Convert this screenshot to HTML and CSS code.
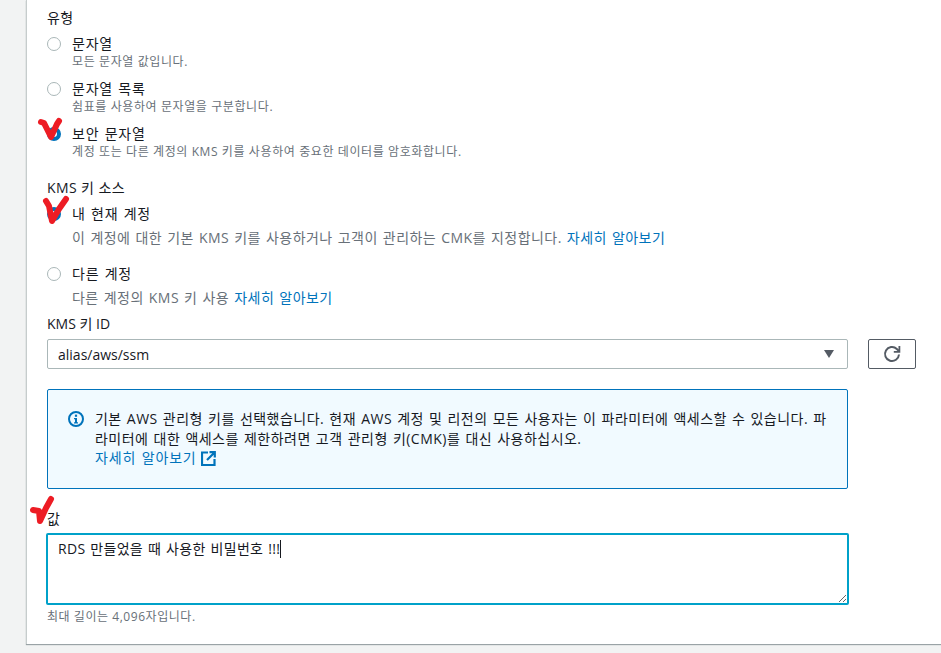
FILE: index.html
```html
<!DOCTYPE html>
<html lang="ko">
<head>
<meta charset="utf-8">
<title>파라미터</title>
<link rel="stylesheet" href="styles.css">
</head>
<body>
<main class="card">
  <div class="label label-type">유형</div>
  <div class="radio-item">
    <span class="radio"></span>
    <div><div class="title">문자열</div><div class="desc">모든 문자열 값입니다.</div></div>
  </div>
  <div class="radio-item">
    <span class="radio"></span>
    <div><div class="title">문자열 목록</div><div class="desc">쉼표를 사용하여 문자열을 구분합니다.</div></div>
  </div>
  <div class="radio-item">
    <span class="radio radio-on"></span>
    <div><div class="title">보안 문자열</div><div class="desc">계정 또는 다른 계정의 KMS 키를 사용하여 중요한 데이터를 암호화합니다.</div></div>
  </div>
  <div class="label label-source">KMS 키 소스</div>
  <div class="radio-item wide">
    <span class="radio radio-on"></span>
    <div><div class="title">내 현재 계정</div><div class="desc-lg">이 계정에 대한 기본 KMS 키를 사용하거나 고객이 관리하는 CMK를 지정합니다. <a class="link">자세히 알아보기</a></div></div>
  </div>
  <div class="radio-item wide">
    <span class="radio"></span>
    <div><div class="title">다른 계정</div><div class="desc-lg">다른 계정의 KMS 키 사용 <a class="link">자세히 알아보기</a></div></div>
  </div>
  <div class="label label-id">KMS 키 ID</div>
  <div class="select-row">
    <div class="select"><span>alias/aws/ssm</span><span class="caret-down"></span></div>
    <button class="refresh" type="button" aria-label="새로 고침">
      <svg width="18" height="18" viewBox="0 0 18 18" fill="none" stroke="#545b64" stroke-width="2"><path d="M16 9.5a7 7 0 1 1-2.2-5.6L16 6"/><path d="M16.4 1v5.8h-5.6" stroke-width="1.8"/></svg>
    </button>
  </div>
  <div class="alert">
    <svg class="alert-icon" width="16" height="16" viewBox="0 0 16 16"><circle cx="8" cy="8" r="7" fill="none" stroke="#0073bb" stroke-width="2"/><rect x="6.9" y="3.6" width="2.2" height="2.2" fill="#0073bb"/><path d="M6 7h3v4.2h1v1.2H6v-1.2h1V8.2H6z" fill="#0073bb"/></svg>
    <div class="alert-text">
      기본 AWS 관리형 키를 선택했습니다. 현재 AWS 계정 및 리전의 모든 사용자는 이 파라미터에 액세스할 수 있습니다. 파<br>라미터에 대한 액세스를 제한하려면 고객 관리형 키(CMK)를 대신 사용하십시오.<br>
      <a class="link">자세히 알아보기</a>
      <svg class="ext" width="15" height="15" viewBox="0 0 15 15" fill="none" stroke="#0073bb" stroke-width="2.2"><path d="M7 1.5H1v12.5h12.5V8"/><path d="M6 9l7-7M8.5 1.2h5.3v5.3"/></svg>
    </div>
  </div>
  <div class="label label-value">값</div>
  <div class="textarea">RDS 만들었을 때 사용한 비밀번호 !!!<span class="text-caret"></span></div>
  <div class="hint">최대 길이는 4,096자입니다.</div>
</main>
<svg class="marks" width="941" height="653" viewBox="0 0 941 653" fill="none" stroke="#ed1c24" stroke-width="6" stroke-linecap="round" stroke-linejoin="round" aria-hidden="true">
  <path d="M41 122l3 1 7 14 6-13 2-3"/>
  <path d="M46 201l3 5 3 15 7-12 7-10"/>
  <path d="M33 510l6 1 1 10 6-13 5-9"/>
</svg>
</body>
</html>
```
FILE: styles.css
```css
* { box-sizing: border-box; }
html, body { margin: 0; height: 653px; overflow: hidden; }
body {
  background: #f2f3f3;
  font-family: "Open Sans", "Noto Sans CJK KR", sans-serif;
  color: #16191f;
  position: relative;
}
.card {
  margin-left: 26px;
  height: 644px;
  padding: 8px 0 0 20px;
  background: #fff;
  border-left: 1px solid #c6cccc;
  box-shadow: 0 1px 1px 0 #9aa3a6;
  font-size: 14px;
}
.label { height: 20px; line-height: 20px; font-size: 14px; letter-spacing: 0.4px; }
.label-type { margin-bottom: 7px; }
.radio-item { display: flex; height: 45px; gap: 11px; }
.radio-item.wide { height: 60px; }
.radio {
  flex: none;
  width: 14px;
  height: 14px;
  margin-top: 2px;
  border: 1px solid #aab7b8;
  border-radius: 50%;
  background: #fff;
}
.radio-on { border: 4px solid #0073bb; }
.title { line-height: 18px; font-size: 14px; letter-spacing: 0.75px; word-spacing: 1px; }
.desc { line-height: 17px; font-size: 12px; letter-spacing: 0.6px; color: #687078; }
.desc-lg { margin-top: 6px; line-height: 18px; font-size: 14px; letter-spacing: 0.45px; word-spacing: 1px; color: #687078; }
.link { color: #0073bb; }
.label-source { margin-top: 8px; margin-bottom: 7px; }
.label-id { margin-top: -11px; margin-bottom: 5px; letter-spacing: 0; }
.select-row { display: flex; gap: 20px; align-items: flex-start; }
.select {
  width: 801px;
  height: 30px;
  padding: 0 13px 0 10px;
  border: 1px solid #aab7b8;
  border-radius: 2px;
  display: flex;
  justify-content: space-between;
  align-items: center;
  font-size: 14px;
}
.caret-down {
  width: 0;
  height: 0;
  border-left: 5px solid transparent;
  border-right: 5px solid transparent;
  border-top: 8px solid #545b64;
}
.refresh {
  width: 48px;
  height: 30px;
  padding: 0;
  background: #fff;
  border: 1px solid #545b64;
  border-radius: 2px;
  display: flex;
  align-items: center;
  justify-content: center;
}
.alert {
  width: 801px;
  height: 100px;
  margin-top: 20px;
  padding: 19px 0 0 20px;
  display: flex;
  gap: 11px;
  background: #f1faff;
  border: 1px solid #0073bb;
  border-radius: 2px;
}
.alert-icon { flex: none; margin-top: 2px; }
.alert-text { line-height: 19.5px; font-size: 14px; letter-spacing: 0.48px; word-spacing: 1px; white-space: nowrap; }
.alert-text .link { letter-spacing: 0.85px; }
.ext { vertical-align: -3px; margin-left: -1px; }
.label-value { margin-top: 20px; margin-bottom: 4px; }
.textarea {
  width: 803px;
  height: 72px;
  margin-left: -1px;
  padding: 5px 10px;
  border: 2px solid #00a1c9;
  border-radius: 2px;
  line-height: 18px;
  font-size: 14px;
  letter-spacing: 0.3px;
  word-spacing: 1px;
  resize: both;
  overflow: auto;
}
.text-caret {
  display: inline-block;
  width: 1px;
  height: 18px;
  background: #16191f;
  vertical-align: top;
}
.hint { margin-top: 3px; line-height: 18px; font-size: 12px; letter-spacing: 0.55px; color: #687078; }
.marks { position: absolute; left: 0; top: 0; pointer-events: none; }
```
